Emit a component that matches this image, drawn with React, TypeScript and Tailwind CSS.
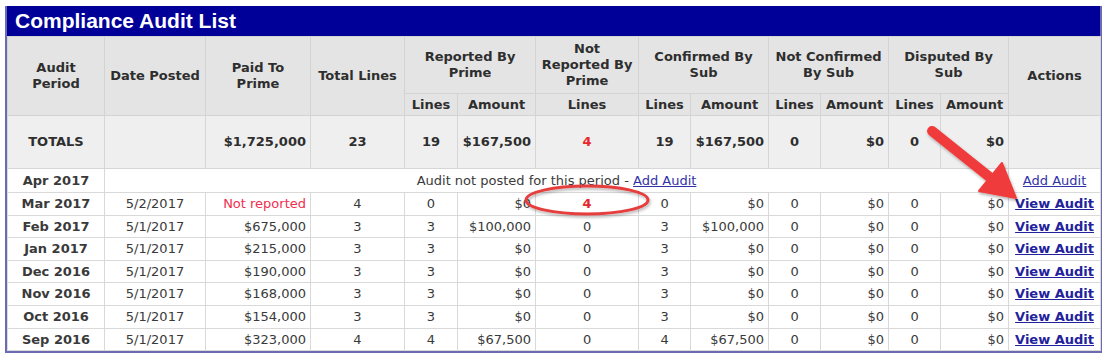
import React from "react"

// audit rows shown under the totals line
const audits = [
  { period: "Mar 2017", posted: "5/2/2017", paid: "Not reported", total: "4", rl: "0", ra: "$0", nr: "4", cl: "0", ca: "$0", ncl: "0", nca: "$0", dl: "0", da: "$0" },
  { period: "Feb 2017", posted: "5/1/2017", paid: "$675,000", total: "3", rl: "3", ra: "$100,000", nr: "0", cl: "3", ca: "$100,000", ncl: "0", nca: "$0", dl: "0", da: "$0" },
  { period: "Jan 2017", posted: "5/1/2017", paid: "$215,000", total: "3", rl: "3", ra: "$0", nr: "0", cl: "3", ca: "$0", ncl: "0", nca: "$0", dl: "0", da: "$0" },
  { period: "Dec 2016", posted: "5/1/2017", paid: "$190,000", total: "3", rl: "3", ra: "$0", nr: "0", cl: "3", ca: "$0", ncl: "0", nca: "$0", dl: "0", da: "$0" },
  { period: "Nov 2016", posted: "5/1/2017", paid: "$168,000", total: "3", rl: "3", ra: "$0", nr: "0", cl: "3", ca: "$0", ncl: "0", nca: "$0", dl: "0", da: "$0" },
  { period: "Oct 2016", posted: "5/1/2017", paid: "$154,000", total: "3", rl: "3", ra: "$0", nr: "0", cl: "3", ca: "$0", ncl: "0", nca: "$0", dl: "0", da: "$0" },
  { period: "Sep 2016", posted: "5/1/2017", paid: "$323,000", total: "4", rl: "4", ra: "$67,500", nr: "0", cl: "4", ca: "$67,500", ncl: "0", nca: "$0", dl: "0", da: "$0" },
]

const th = "border border-[#d3d3d3] bg-[#e4e4e4] px-1 text-center align-middle font-bold text-[#2e2e2e] leading-[16px]"
const tot = "border border-[#d6d6d6] bg-[#efefef] px-1 font-bold text-[#2e2e2e]"
const td = "border border-[#d9d9d9] bg-white px-1 text-[#3a3a3a]"

export default function App() {
  return (
    <div className="relative w-[1108px] h-[359px] bg-white overflow-hidden">
      <div className="ml-[5px] mt-[6px] w-[1097px] border-x-2 border-b-2 border-[#6b6bb3] bg-white">
        <div className="h-[30px] bg-[#000099] pl-[8px] flex items-center font-['Liberation_Sans',Arial,sans-serif] text-[21px] font-bold text-white">
          Compliance Audit List
        </div>
        <table className="w-[1093px] table-fixed border-collapse font-['DejaVu_Sans',Verdana,sans-serif] text-[13px]">
          <colgroup>
            <col className="w-[97px]" />
            <col className="w-[101px]" />
            <col className="w-[105px]" />
            <col className="w-[94px]" />
            <col className="w-[53px]" />
            <col className="w-[78px]" />
            <col className="w-[103px]" />
            <col className="w-[52px]" />
            <col className="w-[78px]" />
            <col className="w-[52px]" />
            <col className="w-[68px]" />
            <col className="w-[52px]" />
            <col className="w-[68px]" />
            <col className="w-[92px]" />
          </colgroup>
          <thead>
            <tr className="h-[57px]">
              <th rowSpan={2} className={th}>Audit<br />Period</th>
              <th rowSpan={2} className={th}>Date Posted</th>
              <th rowSpan={2} className={th}>Paid To<br />Prime</th>
              <th rowSpan={2} className={th}>Total Lines</th>
              <th colSpan={2} className={th}>Reported By<br />Prime</th>
              <th className={th}>Not<br />Reported By<br />Prime</th>
              <th colSpan={2} className={th}>Confirmed By<br />Sub</th>
              <th colSpan={2} className={th}>Not Confirmed<br />By Sub</th>
              <th colSpan={2} className={th}>Disputed By<br />Sub</th>
              <th rowSpan={2} className={th}>Actions</th>
            </tr>
            <tr className="h-[22px]">
              <th className={th}>Lines</th>
              <th className={th}>Amount</th>
              <th className={th}>Lines</th>
              <th className={th}>Lines</th>
              <th className={th}>Amount</th>
              <th className={th}>Lines</th>
              <th className={th}>Amount</th>
              <th className={th}>Lines</th>
              <th className={th}>Amount</th>
            </tr>
          </thead>
          <tbody>
            <tr className="h-[53px]">
              <td className={`${tot} text-center`}>TOTALS</td>
              <td className={tot}></td>
              <td className={`${tot} text-right`}>$1,725,000</td>
              <td className={`${tot} text-center`}>23</td>
              <td className={`${tot} text-center`}>19</td>
              <td className={`${tot} text-right`}>$167,500</td>
              <td className={`${tot} text-center text-[#e8282b]`}>4</td>
              <td className={`${tot} text-center`}>19</td>
              <td className={`${tot} text-right`}>$167,500</td>
              <td className={`${tot} text-center`}>0</td>
              <td className={`${tot} text-right`}>$0</td>
              <td className={`${tot} text-center`}>0</td>
              <td className={`${tot} text-right`}>$0</td>
              <td className={tot}></td>
            </tr>
            <tr className="h-[24px]">
              <td className={`${td} text-center font-bold text-[#2e2e2e]`}>Apr 2017</td>
              <td colSpan={12} className={`${td} text-center`}>
                Audit not posted for this period -{" "}
                <a href="#" className="text-[#3232a8] underline">Add Audit</a>
              </td>
              <td className={`${td} text-center`}>
                <a href="#" className="text-[#3232a8] underline">Add Audit</a>
              </td>
            </tr>
            {audits.map((a) => (
              <tr key={a.period} className="h-[22.6px]">
                <td className={`${td} text-center font-bold text-[#2e2e2e]`}>{a.period}</td>
                <td className={`${td} text-center`}>{a.posted}</td>
                <td className={`${td} text-right ${a.paid === "Not reported" ? "text-[#ef2f4f]" : ""}`}>{a.paid}</td>
                <td className={`${td} text-center`}>{a.total}</td>
                <td className={`${td} text-center`}>{a.rl}</td>
                <td className={`${td} text-right`}>{a.ra}</td>
                <td className={`${td} text-center ${a.nr !== "0" ? "font-bold text-[#e8282b]" : ""}`}>{a.nr}</td>
                <td className={`${td} text-center`}>{a.cl}</td>
                <td className={`${td} text-right`}>{a.ca}</td>
                <td className={`${td} text-center`}>{a.ncl}</td>
                <td className={`${td} text-right`}>{a.nca}</td>
                <td className={`${td} text-center`}>{a.dl}</td>
                <td className={`${td} text-right`}>{a.da}</td>
                <td className={`${td} text-center whitespace-nowrap`}>
                  <a href="#" className="font-bold text-[#22229c] underline">View Audit</a>
                </td>
              </tr>
            ))}
          </tbody>
        </table>
      </div>

      {/* red annotation drawn over the screenshot */}
      <svg className="absolute left-0 top-0 pointer-events-none" width="1108" height="359" viewBox="0 0 1108 359">
        <defs>
          <filter id="shadow" x="-20%" y="-20%" width="140%" height="140%">
            <feDropShadow dx="1" dy="2" stdDeviation="1.5" floodColor="#000" floodOpacity="0.3" />
          </filter>
        </defs>
        <ellipse cx="587" cy="200" rx="61" ry="14" fill="none" stroke="#e63c3c" strokeWidth="3" filter="url(#shadow)" />
        <g filter="url(#shadow)" fill="#ef3b3b" stroke="#ef3b3b">
          <line x1="932" y1="131" x2="992" y2="179" strokeWidth="10" strokeLinecap="round" />
          <polygon points="1016,198 979,191 1002,163" strokeWidth="2" strokeLinejoin="round" />
        </g>
      </svg>
    </div>
  )
}
